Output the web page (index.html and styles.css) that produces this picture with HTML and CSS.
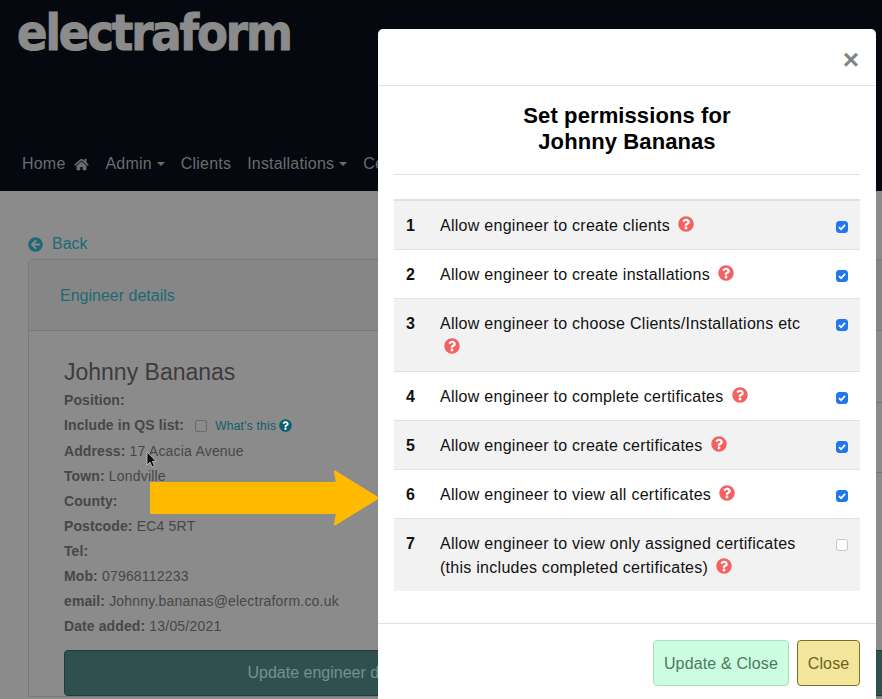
FILE: index.html
```html
<!DOCTYPE html>
<html lang="en">
<head>
<meta charset="utf-8">
<title>Set permissions</title>
<link rel="stylesheet" href="styles.css">
</head>
<body>
<svg class="defs" width="0" height="0" aria-hidden="true">
  <symbol id="q" viewBox="0 0 512 512">
    <circle cx="256" cy="256" r="248" fill="currentColor"/>
    <path d="M262.655 90c-54.497 0-89.255 22.957-116.549 63.758-3.536 5.286-2.353 12.415 2.715 16.258l34.699 26.31c5.205 3.947 12.621 3.008 16.665-2.122 17.864-22.658 30.113-35.797 57.303-35.797 20.429 0 45.698 13.148 45.698 32.958 0 14.976-12.363 22.667-32.534 33.976C247.128 238.528 216 254.941 216 296v4c0 6.627 5.373 12 12 12h56c6.627 0 12-5.373 12-12v-1.333c0-28.462 83.186-29.647 83.186-106.667 0-58.002-60.165-102-116.531-102zM256 338c-25.365 0-46 20.635-46 46 0 25.364 20.635 46 46 46s46-20.636 46-46c0-25.365-20.635-46-46-46z" fill="#fff"/>
  </symbol>
</svg>

<div class="page">
  <header class="masthead">
    <div class="logo">electraform</div>
    <nav class="nav">
      <a class="nav-home">Home
        <svg class="home-icon" viewBox="0 0 576 512"><path d="M280.37 148.26L96 300.11V464a16 16 0 0 0 16 16l112.06-.29a16 16 0 0 0 15.92-16V368a16 16 0 0 1 16-16h64a16 16 0 0 1 16 16v95.64a16 16 0 0 0 16 16.05L464 480a16 16 0 0 0 16-16V300L295.67 148.26a12.19 12.19 0 0 0-15.3 0zM571.6 251.47L488 182.56V44.05a12 12 0 0 0-12-12h-56a12 12 0 0 0-12 12v72.61L318.47 43a48 48 0 0 0-61 0L4.34 251.47a12 12 0 0 0-1.6 16.9l25.5 31A12 12 0 0 0 45.15 301l235.22-193.74a12.19 12.19 0 0 1 15.3 0L530.9 301a12 12 0 0 0 16.9-1.6l25.5-31a12 12 0 0 0-1.7-16.93z" fill="currentColor"/></svg>
      </a>
      <a class="nav-link caret">Admin</a>
      <a class="nav-link">Clients</a>
      <a class="nav-link caret">Installations</a>
      <a class="nav-link">Certificates</a>
    </nav>
  </header>

  <main class="content">
    <a class="back">
      <svg class="back-icon" viewBox="0 0 512 512"><path d="M256 504C119 504 8 393 8 256S119 8 256 8s248 111 248 248-111 248-248 248zm28.9-143.600L209.400 288H392c13.300 0 24-10.700 24-24v-16c0-13.300-10.700-24-24-24H209.400l75.500-72.400c9.700-9.300 9.900-24.800.4-34.300l-11-10.900c-9.400-9.400-24.600-9.400-33.900 0L107.700 239c-9.400 9.400-9.400 24.600 0 33.900l132.700 132.700c9.400 9.400 24.600 9.400 33.900 0l11-10.900c9.500-9.500 9.300-25-.4-34.300z" fill="currentColor"/></svg>
      Back
    </a>
    <section class="card">
      <div class="card-head"><a>Engineer details</a></div>
      <div class="card-body">
        <h2 class="person">Johnny Bananas</h2>
        <p class="line"><b>Position:</b></p>
        <p class="line qs"><b>Include in QS list:</b><span class="page-check"></span><a class="whats">What's this</a><svg class="whats-icon"><use href="#q"/></svg></p>
        <p class="line"><b>Address:</b> 17 Acacia Avenue</p>
        <p class="line"><b>Town:</b> Londville</p>
        <p class="line"><b>County:</b></p>
        <p class="line"><b>Postcode:</b> EC4 5RT</p>
        <p class="line"><b>Tel:</b></p>
        <p class="line"><b>Mob:</b> 07968112233</p>
        <p class="line"><b>email:</b> Johnny.bananas@electraform.co.uk</p>
        <p class="line"><b>Date added:</b> 13/05/2021</p>
        <div class="update-engineer">Update engineer details</div>
      </div>
      <div class="side-rows"></div>
    </section>
  </main>
</div>

<svg class="arrow" viewBox="0 0 230 56" aria-hidden="true"><path d="M1 13H187L185 1.500 228 28 185 54.500 187 43H1z" fill="#ffba00" stroke="#ffba00" stroke-width="2" stroke-linejoin="round"/></svg>
<svg class="cursor" viewBox="0 0 12 18" aria-hidden="true"><path d="M1 1v13l3-3 2 5 2.400-1-2-4.700H10z" fill="#0b0b0b" stroke="#ddd" stroke-width=".7"/></svg>

<aside class="modal">
  <div class="modal-top"><span class="close-x">×</span></div>
  <div class="modal-body">
    <h1 class="modal-title">Set permissions for<br>Johnny Bananas</h1>
    <hr class="rule">
    <div class="perms">
      <div class="perm striped first">
        <b class="num">1</b>
        <div class="label">Allow engineer to create clients <svg class="help"><use href="#q"/></svg></div>
        <span class="check on"></span>
      </div>
      <div class="perm">
        <b class="num">2</b>
        <div class="label">Allow engineer to create installations <svg class="help"><use href="#q"/></svg></div>
        <span class="check on"></span>
      </div>
      <div class="perm striped">
        <b class="num">3</b>
        <div class="label">Allow engineer to choose Clients/Installations etc <svg class="help"><use href="#q"/></svg></div>
        <span class="check on"></span>
      </div>
      <div class="perm">
        <b class="num">4</b>
        <div class="label">Allow engineer to complete certificates <svg class="help"><use href="#q"/></svg></div>
        <span class="check on"></span>
      </div>
      <div class="perm striped">
        <b class="num">5</b>
        <div class="label">Allow engineer to create certificates <svg class="help"><use href="#q"/></svg></div>
        <span class="check on"></span>
      </div>
      <div class="perm">
        <b class="num">6</b>
        <div class="label">Allow engineer to view all certificates <svg class="help"><use href="#q"/></svg></div>
        <span class="check on"></span>
      </div>
      <div class="perm striped">
        <b class="num">7</b>
        <div class="label">Allow engineer to view only assigned certificates<br>(this includes completed certificates) <svg class="help"><use href="#q"/></svg></div>
        <span class="check"></span>
      </div>
    </div>
  </div>
  <div class="modal-foot">
    <button class="btn btn-update">Update &amp; Close</button>
    <button class="btn btn-close">Close</button>
  </div>
</aside>
</body>
</html>
```
FILE: styles.css
```css
* { box-sizing: border-box; }
html, body { margin: 0; height: 100%; }
body {
  width: 882px;
  height: 699px;
  overflow: hidden;
  position: relative;
  background: #8b8b8b;
  font-family: "Liberation Sans", Arial, sans-serif;
  color: #414141;
}
.defs { position: absolute; }

.masthead {
  height: 191px;
  background: #05080f;
  display: flex;
  flex-direction: column;
  justify-content: space-between;
  padding: 0 0 14px 22px;
  white-space: nowrap;
  overflow: hidden;
}
.logo {
  align-self: flex-start;
  margin: 4px 0 0 -5px;
  font-family: "DejaVu Sans", sans-serif;
  font-weight: 700;
  font-size: 45px;
  line-height: 54px;
  letter-spacing: -2.100px;
  color: #8b8b8b;
  -webkit-text-stroke: 1px #8b8b8b;
  transform: scaleY(1.1);
  transform-origin: left top;
}
.nav { display: flex; align-items: center; gap: 16px; font-size: 16px; line-height: 26px; letter-spacing: .2px; color: #6c6c6e; }
.nav-home { display: flex; align-items: center; gap: 9px; }
.home-icon { width: 15px; height: 13px; }
.caret::after {
  content: "";
  display: inline-block;
  margin-left: 5px;
  vertical-align: 3px;
  border-top: 4px solid currentColor;
  border-left: 4px solid transparent;
  border-right: 4px solid transparent;
}

.content { padding: 43px 0 0 28px; }
.back { display: flex; align-items: center; gap: 9px; height: 20px; margin-bottom: 5px; font-size: 16px; color: #1d6a76; }
.back-icon { width: 15px; height: 15px; }
.card { width: 900px; border: 1px solid #797979; border-radius: 4px 0 0 0; }
.card-head { height: 71px; padding: 26px 31px 0; font-size: 16px; line-height: 20px; color: #1d6a76; background: #868686; border-bottom: 1px solid #797979; }
.card-body { padding: 26px 35px 0; }
.person { margin: 0 0 1px; font-size: 23px; font-weight: 400; line-height: 30px; color: #3c3c3c; }
.line { margin: 0; height: 25px; font-size: 14px; line-height: 25px; letter-spacing: .2px; color: #474747; white-space: nowrap; }
.line b { letter-spacing: .1px; }
.qs { display: flex; align-items: center; margin-bottom: 1px; }
.page-check { width: 12px; height: 12px; margin: 1px 8px 0 11px; border: 1px solid #6a6a6a; border-radius: 2px; }
.whats { font-size: 12px; letter-spacing: .25px; color: #0f5d6a; margin-right: 3px; margin-top: 1px; }
.whats-icon { width: 13px; height: 13px; color: #08606d; }
.update-engineer {
  margin-top: 11px;
  height: 46px;
  background: #2e5150;
  border: 1px solid #1f3a3a;
  border-radius: 4px;
  text-align: center;
  font-size: 16px;
  line-height: 44px;
  color: #76908f;
  padding-right: 292px;
}
.side-rows { position: absolute; left: 860px; top: 402px; width: 22px; height: 71px; border-top: 1px solid #747474; border-bottom: 1px solid #747474; }

.arrow { position: absolute; left: 150px; top: 470px; width: 230px; height: 56px; }
.cursor { position: absolute; left: 146px; top: 451px; width: 12px; height: 18px; }

.modal {
  position: absolute;
  left: 378px;
  top: 29px;
  width: 498px;
  height: 690px;
  background: #fff;
  border-radius: 5px;
  color: #111;
}
.modal-top { height: 57px; border-bottom: 1px solid #dee2e6; text-align: right; padding: 16px 17px 0 0; }
.close-x { font-size: 28px; line-height: 30px; font-weight: 700; color: #838383; }
.modal-body { padding: 17px 16px 0; height: 538px; border-bottom: 1px solid #dee2e6; }
.modal-title { margin: 0; text-align: center; font-size: 22px; line-height: 26px; font-weight: 700; letter-spacing: .1px; color: #000; }
.rule { margin: 19px 0 24px; border: 0; border-top: 1px solid #dee2e6; }
.perm { display: flex; border-top: 1px solid #dee2e6; padding: 13px 0 11px 12px; font-size: 16px; line-height: 24px; }
.perm.first { border-top-width: 2px; }
.striped { background: #f2f2f3; }
.num { width: 34px; flex: none; }
.label { flex: 1; margin-right: 20px; letter-spacing: .27px; }
.help { width: 16px; height: 16px; margin-left: 3.600px; color: #f56060; vertical-align: -1px; }
.check {
  flex: none;
  width: 12px;
  height: 12px;
  margin: 7px 12px 0 0;
  background: #fff;
  border: 1px solid #c6c6c6;
  border-radius: 3px;
}
.check.on {
  background: #1f78ee center / 10px 10px no-repeat url("data:image/svg+xml,%3Csvg xmlns='http://www.w3.org/2000/svg' viewBox='0 0 10 10'%3E%3Cpath d='M2 5.200 4.100 7.300 8 2.800' fill='none' stroke='%23fff' stroke-width='1.800'/%3E%3C/svg%3E");
  border-color: #1f78ee;
}
.modal-foot { display: flex; justify-content: flex-end; gap: 8px; padding: 16px 16px 0 0; }
.btn { height: 46px; font: 16px/1 "Liberation Sans", Arial, sans-serif; letter-spacing: .15px; border-radius: 4px; padding: 1px 0 0; }
.btn-update { width: 136px; background: #cdfde0; border: 1px solid #a9e0bc; color: #4c7a5a; }
.btn-close { width: 63px; background: #f3e69a; border: 1px solid #7a6f2a; color: #6b6224; }
```
